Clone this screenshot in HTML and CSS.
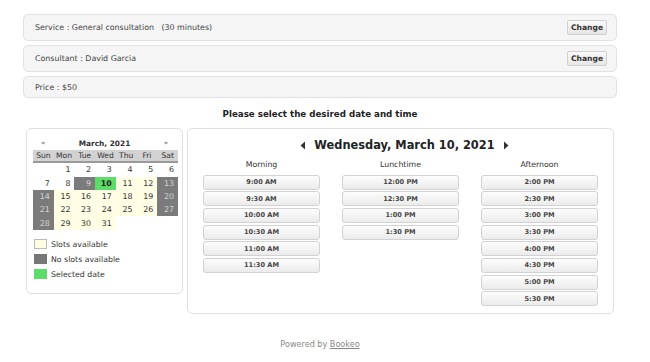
FILE: index.html
```html
<!DOCTYPE html>
<html lang="en">
<head>
  <meta charset="UTF-8">
  <title>Book an appointment</title>
  <meta name="viewport" content="width=device-width, initial-scale=1.0">
  <link rel="stylesheet" href="styles.css">
</head>
<body>
  <div class="page">
    <div class="info-row tall">
      <span>Service : General consultation&nbsp;&nbsp;&nbsp;(30 minutes)</span>
      <button class="change">Change</button>
    </div>
    <div class="info-row tall">
      <span>Consultant : David Garcia</span>
      <button class="change">Change</button>
    </div>
    <div class="info-row">
      <span>Price : $50</span>
    </div>

    <h2 class="prompt">Please select the desired date and time</h2>

    <div class="booking">
      <div class="calendar-box">
        <div class="cal-head">
          <span class="nav">&laquo;</span>
          <b>March, 2021</b>
          <span class="nav">&raquo;</span>
        </div>
        <div class="cal">
          <div class="dname">Sun</div><div class="dname">Mon</div><div class="dname">Tue</div><div class="dname">Wed</div><div class="dname">Thu</div><div class="dname">Fri</div><div class="dname">Sat</div>
          <div class="day"></div><div class="day">1</div><div class="day">2</div><div class="day">3</div><div class="day">4</div><div class="day">5</div><div class="day">6</div>
          <div class="day">7</div><div class="day">8</div><div class="day full">9</div><div class="day sel">10</div><div class="day open">11</div><div class="day open">12</div><div class="day full">13</div>
          <div class="day full">14</div><div class="day open">15</div><div class="day open">16</div><div class="day open">17</div><div class="day open">18</div><div class="day open">19</div><div class="day full">20</div>
          <div class="day full">21</div><div class="day open">22</div><div class="day open">23</div><div class="day open">24</div><div class="day open">25</div><div class="day open">26</div><div class="day full">27</div>
          <div class="day full">28</div><div class="day open">29</div><div class="day open">30</div><div class="day open">31</div>
        </div>
        <ul class="legend">
          <li><i class="swatch open"></i>Slots available</li>
          <li><i class="swatch full"></i>No slots available</li>
          <li><i class="swatch sel"></i>Selected date</li>
        </ul>
      </div>

      <div class="slots-box">
        <div class="day-title">
          <svg width="6" height="9" viewBox="0 0 6 9"><path d="M5 0.5 L0.5 4.5 L5 8.5 Z" fill="#333"/></svg>
          <span>Wednesday, March 10, 2021</span>
          <svg width="6" height="9" viewBox="0 0 6 9"><path d="M1 0.5 L5.5 4.5 L1 8.5 Z" fill="#333"/></svg>
        </div>
        <div class="slot-cols">
          <div class="slot-col">
            <div class="col-name">Morning</div>
            <button class="slot">9:00 AM</button>
            <button class="slot">9:30 AM</button>
            <button class="slot">10:00 AM</button>
            <button class="slot">10:30 AM</button>
            <button class="slot">11:00 AM</button>
            <button class="slot">11:30 AM</button>
          </div>
          <div class="slot-col">
            <div class="col-name">Lunchtime</div>
            <button class="slot">12:00 PM</button>
            <button class="slot">12:30 PM</button>
            <button class="slot">1:00 PM</button>
            <button class="slot">1:30 PM</button>
          </div>
          <div class="slot-col">
            <div class="col-name">Afternoon</div>
            <button class="slot">2:00 PM</button>
            <button class="slot">2:30 PM</button>
            <button class="slot">3:00 PM</button>
            <button class="slot">3:30 PM</button>
            <button class="slot">4:00 PM</button>
            <button class="slot">4:30 PM</button>
            <button class="slot">5:00 PM</button>
            <button class="slot">5:30 PM</button>
          </div>
        </div>
      </div>
    </div>

    <div class="powered">Powered by <a href="#">Bookeo</a></div>
  </div>
</body>
</html>
```

FILE: styles.css
```css
body {
  margin: 0;
  background: #fff;
  color: #333;
  font-family: "DejaVu Sans", Verdana, sans-serif;
}
.page {
  width: 594px;
  margin-left: 23px;
  padding-top: 14px;
}
.info-row {
  display: flex;
  align-items: center;
  justify-content: space-between;
  height: 22px;
  margin-bottom: 4px;
  padding: 0 9px 0 11px;
  box-sizing: border-box;
  background: #f5f5f5;
  border: 1px solid #e2e2e2;
  border-radius: 5px;
  font-size: 7.9px;
  color: #444;
}
.info-row.tall {
  height: 27px;
}
.change {
  width: 40px;
  height: 15px;
  padding: 0;
  border: 1px solid #d0d0d0;
  border-radius: 2px;
  background: linear-gradient(#fafafa, #e6e6e6);
  font-family: inherit;
  font-size: 7.6px;
  font-weight: bold;
  color: #333;
}
.prompt {
  margin: 11px 0 9px;
  text-align: center;
  font-size: 8.7px;
  font-weight: bold;
  color: #222;
}
.booking {
  display: flex;
  gap: 4px;
  padding-left: 3px;
}
.calendar-box {
  width: 157px;
  height: 166px;
  box-sizing: border-box;
  padding: 8px 5px 0 6px;
  border: 1px solid #e0e0e0;
  border-radius: 5px;
}
.cal-head {
  display: flex;
  justify-content: space-between;
  align-items: center;
  height: 12px;
  padding: 0 9px 0 8px;
  font-size: 7.4px;
}
.cal-head .nav {
  color: #555;
  font-size: 7px;
}
.cal {
  display: grid;
  grid-template-columns: repeat(7, 1fr);
  grid-auto-rows: 13.3px;
  width: 145px;
  margin-top: 1px;
  font-size: 7.9px;
}
.dname {
  display: flex;
  align-items: center;
  justify-content: center;
  background: #d2d2d2;
  border-bottom: 2px solid #999;
  color: #333;
  font-size: 7.6px;
}
.day {
  display: flex;
  align-items: center;
  justify-content: flex-end;
  padding-right: 4px;
  color: #333;
}
.day.open { background: #fffde4; }
.day.full { background: #7b7b7b; color: #d4d4d4; }
.day.sel { background: #5ddc69; font-weight: bold; color: #222; }
.legend {
  list-style: none;
  margin: 7px 0 0 1px;
  padding: 0;
  font-size: 7.8px;
}
.legend li {
  display: flex;
  align-items: center;
  height: 15px;
}
.swatch {
  width: 13px;
  height: 10px;
  box-sizing: border-box;
  margin-right: 4px;
  border: 1px solid #bbb;
}
.swatch.open { background: #fffde0; }
.swatch.full { background: #777; border-color: #777; }
.swatch.sel { background: #5ddc69; border-color: #5ddc69; }
.slots-box {
  width: 427px;
  height: 186px;
  box-sizing: border-box;
  padding: 7px 15px 0;
  border: 1px solid #e0e0e0;
  border-radius: 5px;
}
.day-title {
  display: flex;
  justify-content: center;
  align-items: center;
  gap: 8px;
  height: 18px;
  padding-left: 8px;
  font-size: 11.4px;
  font-weight: bold;
  color: #222;
}
.slot-cols {
  display: flex;
  gap: 22px;
  margin-top: 2px;
}
.slot-col {
  display: flex;
  flex-direction: column;
  gap: 1.67px;
  width: 117px;
}
.col-name {
  height: 17px;
  line-height: 17px;
  text-align: center;
  font-size: 7.8px;
  color: #333;
}
.slot {
  height: 15px;
  padding: 0;
  border: 1px solid #d2d2d2;
  border-radius: 3px;
  background: linear-gradient(#fdfdfd, #ebebeb);
  font-family: inherit;
  font-size: 6.6px;
  font-weight: bold;
  color: #444;
}
.powered {
  margin-top: 25px;
  text-align: center;
  font-size: 8.1px;
  color: #888;
}
.powered a {
  color: #888;
}
```
